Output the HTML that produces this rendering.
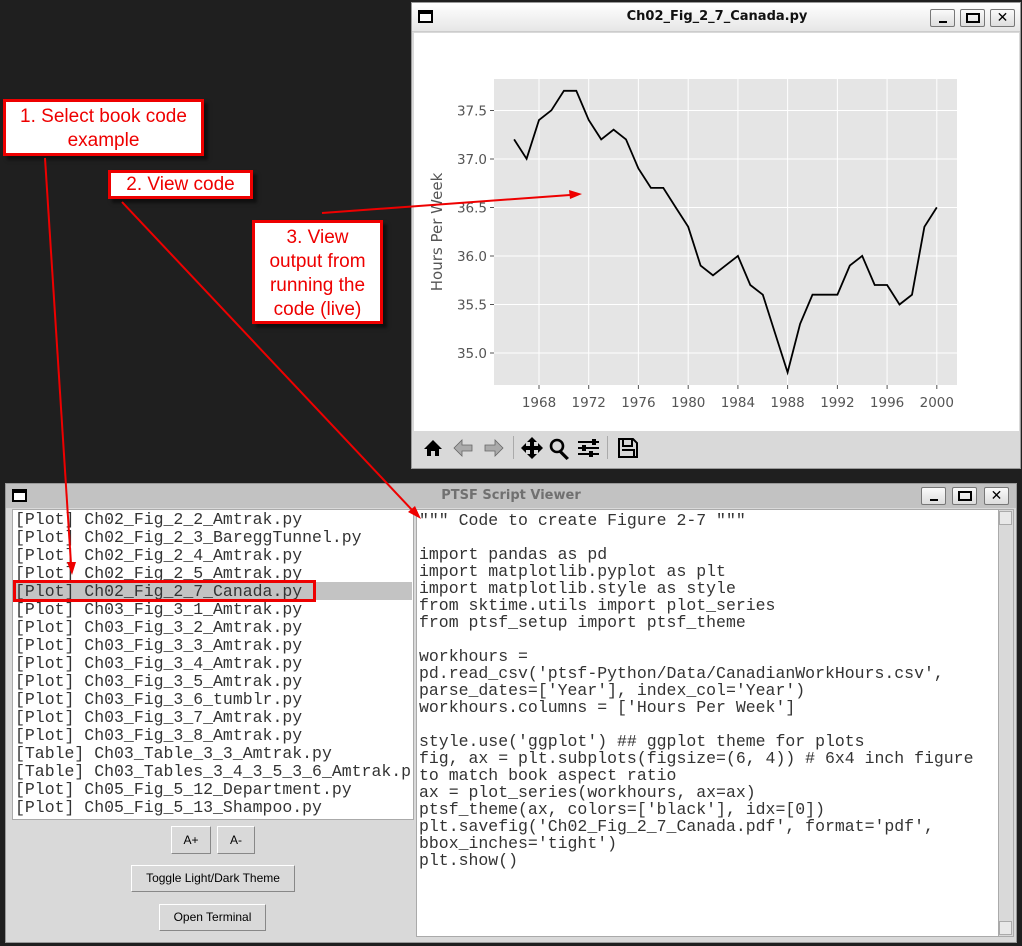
<!DOCTYPE html>
<html><head><meta charset="utf-8"><style>
*{margin:0;padding:0;box-sizing:border-box}
body{width:1022px;height:946px;background:#1f1f1f;position:relative;overflow:hidden;font-family:"DejaVu Sans","Liberation Sans",sans-serif}
.abs{position:absolute}
.mono{font-family:"Liberation Mono",monospace;font-size:16.5px;color:#333;white-space:pre}
.btn{position:absolute;background:#d9d9d9;border:1px solid;border-color:#fff #888 #888 #fff;font-family:"Liberation Sans",sans-serif;font-size:12px;color:#000;text-align:center}
.wb{position:absolute;width:25px;height:18px;border:1px solid #777;background:linear-gradient(#fafafa,#ddd);border-radius:2px}
.ann{position:absolute;background:#fff;border:3px solid #e00;color:#e00;font-family:"Liberation Sans",sans-serif;font-size:19px;text-align:center;line-height:24px;box-shadow:4px 4px 3px rgba(0,0,0,.5)}
</style></head><body>

<div class="abs" style="left:411px;top:2px;width:610px;height:467px;background:#d9d9d9;border:1px solid #999">
  <div class="abs" style="left:0;top:0;width:608px;height:29px;background:linear-gradient(#ffffff,#e6e6e6);border-bottom:1px solid #ccc"></div>
  <div class="abs" style="left:6px;top:7px;width:15px;height:13px;border:2px solid #000;border-top-width:4px;background:#fff"></div>
  <div class="abs" style="left:0;top:6px;width:610px;text-align:center;font-size:13px;font-weight:bold;color:#111">Ch02_Fig_2_7_Canada.py</div>
  <div class="wb" style="left:518px;top:6px"><div class="abs" style="left:8px;top:11px;width:8px;height:2px;background:#000"></div></div>
  <div class="wb" style="left:548px;top:6px"><div class="abs" style="left:5px;top:3px;width:14px;height:10px;border:2px solid #000"></div></div>
  <div class="wb" style="left:578px;top:6px;font-size:14px;font-weight:bold;text-align:center;line-height:16px">✕</div>
  <div class="abs" style="left:2px;top:30px;width:605px;height:398px;background:#fff"></div>
</div>
<svg class="abs" style="left:0;top:0" width="1022" height="470">
  <rect x="494" y="79" width="463" height="306" fill="#e5e5e5"/>
  <g stroke="#fff" stroke-width="1">
    <line x1="539" y1="79" x2="539" y2="385"/><line x1="588.7" y1="79" x2="588.7" y2="385"/><line x1="638.4" y1="79" x2="638.4" y2="385"/><line x1="688.2" y1="79" x2="688.2" y2="385"/><line x1="737.9" y1="79" x2="737.9" y2="385"/><line x1="787.6" y1="79" x2="787.6" y2="385"/><line x1="837.4" y1="79" x2="837.4" y2="385"/><line x1="887.1" y1="79" x2="887.1" y2="385"/><line x1="936.8" y1="79" x2="936.8" y2="385"/>
    <line x1="494" y1="110.5" x2="957" y2="110.5"/><line x1="494" y1="159" x2="957" y2="159"/><line x1="494" y1="207.5" x2="957" y2="207.5"/><line x1="494" y1="256" x2="957" y2="256"/><line x1="494" y1="304.5" x2="957" y2="304.5"/><line x1="494" y1="353" x2="957" y2="353"/>
  </g>
  <g stroke="#555" stroke-width="1">
    <line x1="490" y1="110.5" x2="494" y2="110.5"/><line x1="490" y1="159" x2="494" y2="159"/><line x1="490" y1="207.5" x2="494" y2="207.5"/><line x1="490" y1="256" x2="494" y2="256"/><line x1="490" y1="304.5" x2="494" y2="304.5"/><line x1="490" y1="353" x2="494" y2="353"/>
    <line x1="539" y1="385" x2="539" y2="389"/><line x1="588.7" y1="385" x2="588.7" y2="389"/><line x1="638.4" y1="385" x2="638.4" y2="389"/><line x1="688.2" y1="385" x2="688.2" y2="389"/><line x1="737.9" y1="385" x2="737.9" y2="389"/><line x1="787.6" y1="385" x2="787.6" y2="389"/><line x1="837.4" y1="385" x2="837.4" y2="389"/><line x1="887.1" y1="385" x2="887.1" y2="389"/><line x1="936.8" y1="385" x2="936.8" y2="389"/>
  </g>
  <g font-family="DejaVu Sans" font-size="13.5" fill="#555" text-anchor="end">
    <text x="487" y="115.5">37.5</text><text x="487" y="164">37.0</text><text x="487" y="212.5">36.5</text><text x="487" y="261">36.0</text><text x="487" y="309.5">35.5</text><text x="487" y="358">35.0</text>
  </g>
  <g font-family="DejaVu Sans" font-size="13.5" fill="#555" text-anchor="middle">
    <text x="539" y="407">1968</text><text x="588.7" y="407">1972</text><text x="638.4" y="407">1976</text><text x="688.2" y="407">1980</text><text x="737.9" y="407">1984</text><text x="787.6" y="407">1988</text><text x="837.4" y="407">1992</text><text x="887.1" y="407">1996</text><text x="936.8" y="407">2000</text>
  </g>
  <text x="0" y="0" transform="translate(442,232) rotate(-90)" font-family="DejaVu Sans" font-size="15" fill="#555" text-anchor="middle">Hours Per Week</text>
  <polyline fill="none" stroke="#000" stroke-width="1.8" points="514.1,139.4 526.6,158.8 539,120 551.4,110.3 563.9,90.8 576.3,90.8 588.7,120 601.2,139.4 613.6,129.7 626,139.4 638.4,168.5 650.9,187.9 663.3,187.9 675.7,207.4 688.2,226.8 700.6,265.6 713,275.3 725.5,265.6 737.9,255.9 750.3,285 762.8,294.7 775.2,333.6 787.6,372.4 800.1,323.9 812.5,294.7 824.9,294.7 837.4,294.7 849.8,265.6 862.2,255.9 874.7,285 887.1,285 899.5,304.5 912,294.7 924.4,226.8 936.8,207.4"/>
  <g fill="#000">
    <path d="M424 449 L433 440 L442 449 L439 449 L439 456 L435 456 L435 451 L431 451 L431 456 L427 456 L427 449Z"/>
    <path d="M454 448 L462 440 L462 445 L472 445 L472 451 L462 451 L462 456Z" fill="#aaa" stroke="#666" stroke-width=".8"/>
    <path d="M503 448 L495 440 L495 445 L485 445 L485 451 L495 451 L495 456Z" fill="#aaa" stroke="#666" stroke-width=".8"/>
    <path d="M532 437 L537 442 L534 442 L534 446 L538 446 L538 443 L543 448 L538 453 L538 450 L534 450 L534 454 L537 454 L532 459 L527 454 L530 454 L530 450 L526 450 L526 453 L521 448 L526 443 L526 446 L530 446 L530 442 L527 442Z"/>
    <circle cx="557" cy="446" r="6" fill="none" stroke="#000" stroke-width="2.6"/>
    <path d="M561 450 L569 458 L566.5 460 L558.5 452Z"/>
    <rect x="578" y="441" width="21" height="2"/><rect x="578" y="447" width="21" height="2"/><rect x="578" y="453" width="21" height="2"/>
    <rect x="592" y="439" width="4" height="6"/><rect x="582" y="445" width="4" height="6"/><rect x="589" y="451" width="4" height="6"/>
  </g>
  <line x1="513.5" y1="436" x2="513.5" y2="459" stroke="#aaa"/>
  <line x1="607.5" y1="436" x2="607.5" y2="459" stroke="#aaa"/>
  <path d="M619 439 H633 L637 443 V457 H619Z M623 439 V446 H632 V439 M622 450 H634 V457" fill="none" stroke="#000" stroke-width="2"/>
</svg>

<div class="abs" style="left:5px;top:483px;width:1012px;height:460px;background:#d9d9d9;border:1px solid #999">
  <div class="abs" style="left:0;top:0;width:1010px;height:24px;background:#c2c2c2"></div>
  <div class="abs" style="left:6px;top:5px;width:15px;height:13px;border:2px solid #000;border-top-width:4px;background:#fff"></div>
  <div class="abs" style="left:0;top:4px;width:1010px;text-align:center;font-size:13px;font-weight:bold;color:#707070">PTSF Script Viewer</div>
  <div class="wb" style="left:915px;top:3px"><div class="abs" style="left:8px;top:11px;width:8px;height:2px;background:#000"></div></div>
  <div class="wb" style="left:946px;top:3px"><div class="abs" style="left:5px;top:3px;width:14px;height:10px;border:2px solid #000"></div></div>
  <div class="wb" style="left:978px;top:3px;font-size:14px;font-weight:bold;text-align:center;line-height:16px">✕</div>
</div>
<div class="abs" style="left:12px;top:509px;width:402px;height:311px;background:#fff;border:1px solid #aaa"></div>
<div class="abs" style="left:13px;top:582px;width:399px;height:18px;background:#c3c3c3"></div>
<div class="abs mono" style="left:15px;top:511px;line-height:18px">[Plot] Ch02_Fig_2_2_Amtrak.py
[Plot] Ch02_Fig_2_3_BareggTunnel.py
[Plot] Ch02_Fig_2_4_Amtrak.py
[Plot] Ch02_Fig_2_5_Amtrak.py
[Plot] Ch02_Fig_2_7_Canada.py
[Plot] Ch03_Fig_3_1_Amtrak.py
[Plot] Ch03_Fig_3_2_Amtrak.py
[Plot] Ch03_Fig_3_3_Amtrak.py
[Plot] Ch03_Fig_3_4_Amtrak.py
[Plot] Ch03_Fig_3_5_Amtrak.py
[Plot] Ch03_Fig_3_6_tumblr.py
[Plot] Ch03_Fig_3_7_Amtrak.py
[Plot] Ch03_Fig_3_8_Amtrak.py
[Table] Ch03_Table_3_3_Amtrak.py
[Table] Ch03_Tables_3_4_3_5_3_6_Amtrak.p
[Plot] Ch05_Fig_5_12_Department.py
[Plot] Ch05_Fig_5_13_Shampoo.py</div>
<div class="abs" style="left:13px;top:580px;width:303px;height:22px;border:3px solid #e00"></div>

<div class="btn" style="left:171px;top:826px;width:40px;height:28px;line-height:26px">A+</div>
<div class="btn" style="left:217px;top:826px;width:38px;height:28px;line-height:26px">A-</div>
<div class="btn" style="left:131px;top:865px;width:164px;height:27px;line-height:25px">Toggle Light/Dark Theme</div>
<div class="btn" style="left:159px;top:904px;width:107px;height:27px;line-height:25px">Open Terminal</div>

<div class="abs" style="left:416px;top:509px;width:598px;height:428px;background:#fff;border:1px solid #aaa"></div>
<div class="abs mono" style="left:419px;top:512px;line-height:17px">""" Code to create Figure 2-7 """

import pandas as pd
import matplotlib.pyplot as plt
import matplotlib.style as style
from sktime.utils import plot_series
from ptsf_setup import ptsf_theme

workhours =
pd.read_csv('ptsf-Python/Data/CanadianWorkHours.csv',
parse_dates=['Year'], index_col='Year')
workhours.columns = ['Hours Per Week']

style.use('ggplot') ## ggplot theme for plots
fig, ax = plt.subplots(figsize=(6, 4)) # 6x4 inch figure
to match book aspect ratio
ax = plot_series(workhours, ax=ax)
ptsf_theme(ax, colors=['black'], idx=[0])
plt.savefig('Ch02_Fig_2_7_Canada.pdf', format='pdf',
bbox_inches='tight')
plt.show()</div>
<div class="abs" style="left:998px;top:510px;width:15px;height:426px;background:#d9d9d9;border-left:1px solid #aaa"></div>
<div class="abs" style="left:999px;top:511px;width:13px;height:14px;border:1px solid #aaa;background:#e8e8e8"></div>
<div class="abs" style="left:999px;top:921px;width:13px;height:14px;border:1px solid #aaa;background:#e8e8e8"></div>

<div class="ann" style="left:3px;top:99px;width:201px;height:57px;padding-top:3px">1. Select book code<br>example</div>
<div class="ann" style="left:108px;top:170px;width:145px;height:29px;line-height:23px">2. View code</div>
<div class="ann" style="left:252px;top:220px;width:131px;height:104px;padding-top:3px">3. View<br>output from<br>running the<br>code (live)</div>
<svg class="abs" style="left:0;top:0" width="1022" height="946">
  <g stroke="#e00" stroke-width="2" fill="#e00">
    <line x1="45" y1="158" x2="71" y2="564"/>
    <path d="M67 562 L76 562 L72 575Z" stroke-width="0"/>
    <line x1="122" y1="202" x2="413" y2="511"/>
    <path d="M408 512 L415 506 L421 519Z" stroke-width="0"/>
    <line x1="322" y1="213" x2="570" y2="195"/>
    <path d="M569 190 L582 194 L570 199Z" stroke-width="0"/>
  </g>
</svg>
</body></html>
